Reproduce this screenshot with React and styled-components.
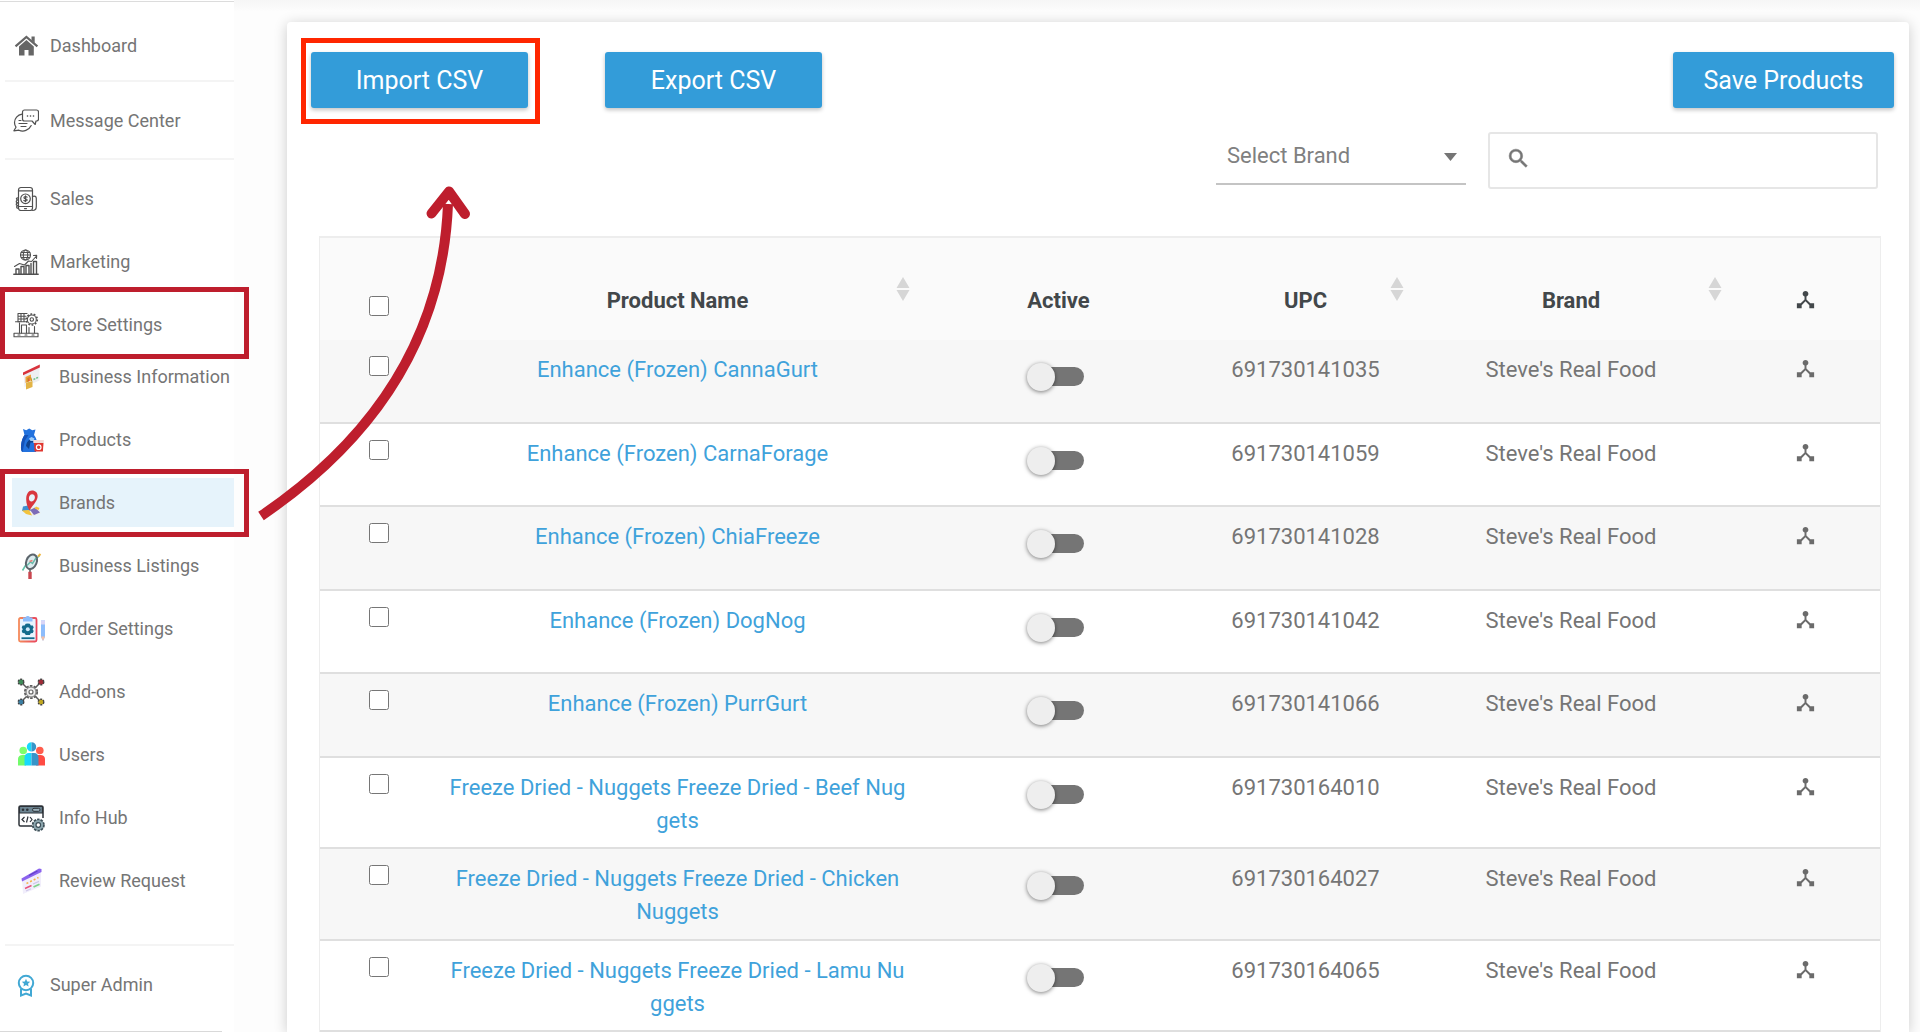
import React from "react";
import styled, { createGlobalStyle } from "styled-components";

const GlobalStyle = createGlobalStyle`
  *, *::before, *::after { box-sizing: border-box; }
  body { margin: 0; background: #fff; overflow-x: hidden; }
  body, button, input, select { font-family: Roboto, "Liberation Sans", sans-serif; }
`;

const crimson = "#be1e2d";

/* ---------- layout ---------- */

const Page = styled.div`
  position: relative;
  display: flex;
  align-items: stretch;
  min-height: 100vh;
`;

const Sidebar = styled.nav`
  flex: none;
  width: 234px;
  margin-top: 1px;
  border-top: 1px solid #dcdcdc;
  padding-top: 19px;
  display: flex;
  flex-direction: column;
`;

const Main = styled.main`
  flex: 1;
  min-width: 0;
  display: flex;
  padding: 22px 11px 0 53px;
  background: linear-gradient(#f6f6f6, #fdfdfd 12px);
`;

const Card = styled.section`
  flex: 1;
  min-width: 0;
  padding: 30px 0 0;
  background: #fff;
  border-radius: 4px 4px 0 0;
  box-shadow: 0 2px 14px rgba(0, 0, 0, 0.2);
`;

/* ---------- sidebar ---------- */

const Group = styled.ul`
  list-style: none;
  margin: ${(p) => (p.$nested ? "3px 0 0 12px" : "0 0 0 5px")};
  padding: 0;
  display: flex;
  flex-direction: column;
  gap: 14px;
`;

const Divider = styled.hr`
  width: 229px;
  height: 2px;
  margin: ${(p) => p.$before}px 0 14px 5px;
  border: 0;
  background: #f4f4f4;
`;

const EndLine = styled.hr`
  width: 222px;
  height: 1px;
  margin: 22px 0 0;
  border: 0;
  background: #d9d9d9;
`;

const Item = styled.li`
  position: relative;
`;

const NavLink = styled.a`
  display: flex;
  align-items: center;
  gap: ${(p) => (p.$nested ? 14 : 11)}px;
  height: 49px;
  padding-left: ${(p) => (p.$nested ? 5 : 8)}px;
  background: ${(p) => (p.$current ? "#e6f3fb" : "transparent")};
  color: #757575;
  font-size: 18px;
  line-height: 24px;
  text-decoration: none;
  white-space: nowrap;
  svg { flex: none; }
`;

const Callout = styled.span`
  position: absolute;
  top: ${(p) => p.$top}px;
  bottom: -10px;
  left: ${(p) => p.$left}px;
  right: -15px;
  border: 5px solid ${crimson};
  pointer-events: none;
`;

/* ---------- toolbar ---------- */

const Actions = styled.div`
  display: flex;
  align-items: center;
  gap: 77px;
  padding: 0 15px 0 24px;
`;

const Spacer = styled.span`
  flex: 1;
`;

const Highlight = styled.div`
  position: relative;
  display: flex;
  &::after {
    content: "";
    position: absolute;
    inset: -14px -12px -16px -10px;
    border: 5px solid #ff2600;
    pointer-events: none;
  }
`;

const ActionButton = styled.button`
  width: ${(p) => p.$width || 217}px;
  height: 56px;
  padding: 2px 0 0;
  border: 0;
  border-radius: 3px;
  background: #339cd9;
  box-shadow: 0 2px 4px rgba(0, 0, 0, 0.24);
  color: #fff;
  font-size: 25px;
  line-height: 32px;
  white-space: nowrap;
`;

const Filters = styled.div`
  display: flex;
  justify-content: flex-end;
  align-items: flex-start;
  gap: 22px;
  padding: 24px 31px 0;
`;

const BrandPicker = styled.label`
  position: relative;
  width: 250px;
  height: 53px;
  border-bottom: 2px solid #c4c4c4;
  svg {
    position: absolute;
    right: 9px;
    top: 21px;
    pointer-events: none;
  }
`;

const BrandSelect = styled.select`
  appearance: none;
  width: 100%;
  height: 46px;
  padding: 0 11px;
  border: 0;
  background: transparent;
  color: #808080;
  font-size: 22px;
  outline: 0;
`;

const SearchBox = styled.label`
  display: flex;
  align-items: center;
  gap: 12px;
  width: 390px;
  height: 57px;
  padding: 0 16px 4px;
  border: 2px solid #e6e6e6;
  border-radius: 3px;
`;

const SearchInput = styled.input`
  flex: 1;
  min-width: 0;
  height: 40px;
  border: 0;
  outline: 0;
  background: transparent;
  color: #555;
  font-size: 22px;
`;

/* ---------- table ---------- */

const TableWrap = styled.div`
  padding: 47px 28px 0 32px;
`;

const Table = styled.table`
  width: 100%;
  table-layout: fixed;
  border-collapse: separate;
  border-spacing: 0;
  border: solid #ededed;
  border-width: 2px 1px 0;
  color: #757575;
  font-size: 22px;
  line-height: 33px;
  text-align: center;
`;

const HeadCell = styled.th`
  position: relative;
  height: 102px;
  padding: 46px 0 0;
  vertical-align: top;
  background: #fafafa;
  color: #42474a;
  font-weight: 700;
`;

const Row = styled.tr`
  background: #fff;
  td { border-bottom: 2px solid #dfdfdf; padding: 13px 0 10px; vertical-align: top; }
  &:nth-child(odd) { background: #f7f7f7; }
  &:nth-child(odd) td { padding-bottom: 11px; }
`;

const NameCell = styled.td`
  && { padding-left: 10px; padding-right: 10px; }
  word-break: break-all;
`;

const ProductLink = styled.a`
  color: #3fa2db;
  text-decoration: none;
`;

const Tick = styled.input`
  display: block;
  width: 20px;
  height: 20px;
  margin: ${(p) => (p.$head ? 12 : 3)}px auto 0;
`;

const Switch = styled.input`
  appearance: none;
  position: relative;
  display: block;
  width: 51px;
  height: 19px;
  margin: 14px auto 25px;
  border-radius: 10px;
  background: #757575;
  &::before {
    content: "";
    position: absolute;
    left: -6px;
    top: -4px;
    width: 28px;
    height: 28px;
    border-radius: 50%;
    background: #eee;
    box-shadow: 0 1px 4px rgba(0, 0, 0, 0.5);
  }
`;

const SortButton = styled.button`
  position: absolute;
  top: 39px;
  right: 8px;
  display: flex;
  padding: 0;
  border: 0;
  background: none;
`;

const IconLine = styled.span`
  display: flex;
  justify-content: center;
  align-items: center;
  height: 31px;
`;

const ArrowOverlay = styled.svg`
  position: absolute;
  left: 250px;
  top: 180px;
  pointer-events: none;
`;

/* ---------- icons ---------- */

const Svg = ({ w = 26, h = 26, box = "0 0 26 26", children, ...rest }) => (
  <svg width={w} height={h} viewBox={box} fill="none" aria-hidden="true" {...rest}>
    {children}
  </svg>
);

const ink = { stroke: "#505050", strokeWidth: 1.2, strokeLinecap: "round", strokeLinejoin: "round" };

const HomeIcon = () => (
  <Svg>
    <path d="M6 13.5 13.4 7l7.4 6.500V22.500H15.500V17h-4v5.500H6z" fill="#666" />
    <path d="M2.500 13.300 13.400 4l11 9.300" stroke="#666" strokeWidth="2.200" />
    <path d="M18.500 3.500h3.200v6.500l-3.200-2.800z" fill="#666" />
  </Svg>
);

const MessageIcon = () => (
  <Svg>
    <g {...ink}>
      <path d="M11.500 2h12a2 2 0 0 1 2 2v7a2 2 0 0 1-2 2h-.5l-.8 3.500-3.200-3.500h-7.500a2 2 0 0 1-2-2V4a2 2 0 0 1 2-2z" />
      <path d="M9 6.200C4.500 7 1.500 10.500 1.500 14.500c0 1.800.6 3.400 1.500 4.700L.9 22.800l5-.6c4.500 2 10 .2 12.300-4.700" />
      <path d="M6 12.500h2M6 15.500h8M8 18.500h5" />
    </g>
    <g fill="#444">
      <circle cx="14.500" cy="8" r="0.800" />
      <circle cx="17.500" cy="8" r="0.800" />
      <circle cx="20.500" cy="8" r="0.800" />
    </g>
  </Svg>
);

const SalesIcon = () => (
  <Svg>
    <g {...ink}>
      <rect x="5.500" y="1.500" width="14" height="23" rx="2.500" />
      <path d="M5.500 4.800h14M5.500 20.500h14M11.500 22.600h2" />
      <circle cx="12.500" cy="12.800" r="4.800" />
      <path d="M14.100 11.200c-.6-.8-3.200-.8-3.200.5 0 1.500 3.300.8 3.300 2.300 0 1.300-2.700 1.300-3.400.4M12.500 9.800v6" strokeWidth="1.100" />
      <path d="M19.500 10.500c2.300-1 3.800 0 3.800 2v8c0 2.500-1 4-3.800 4M5.500 12c-2.800-.5-2.800 2 0 2-3 0-3 2.800 0 2.800-3 0-3 2.800 0 2.800-2.600 0-2.600 2.500 0 2.700" />
    </g>
  </Svg>
);

const MarketingIcon = () => (
  <Svg>
    <g {...ink} strokeWidth="1.100">
      <circle cx="12.500" cy="6" r="5" />
      <ellipse cx="12.500" cy="6" rx="2.200" ry="5" />
      <path d="M7.500 6h10M8.300 3.500h8.400M8.300 8.500h8.400" />
      <path d="M1.500 17.500l5-3 5 1.500 4-4 3 .5L23.500 7M20.500 6.500l3.200-.3-.2 3.200" />
      <path d="M.8 25.200h24.400M3 25v-5h3v5M8 25v-7.500h3V25M13 25v-8.500h3V25M18 25V14.500M20.500 25V12.500h3V25" strokeWidth="1.400" />
    </g>
  </Svg>
);

const StoreIcon = () => (
  <Svg>
    <g {...ink} strokeWidth="1.100">
      <path d="M5 1.500h9M5 1.500v8.200h7.500M5 4.200h8M5 7h7.500M8 1.500v8.200M11 1.500v8.200" />
      <path d="M2.500 9.700h4M6.500 11v10M8.500 21v-8h5v8M16 15.500V21M21.500 14.500V21" />
      <circle cx="18.800" cy="7.500" r="5.500" strokeWidth="1.600" strokeDasharray="1.800 1.600" strokeLinecap="butt" />
      <circle cx="18.800" cy="7.500" r="4.500" />
      <circle cx="18.800" cy="7.500" r="1.700" />
      <path d="M1 21.300h24v3.400H1zM5 23h2M12 23h2M19 23h2" />
    </g>
  </Svg>
);

const SubSvg = (props) => <Svg w={28} h={28} box="0 0 28 28" {...props} />;

const InfoIcon = () => (
  <SubSvg>
    <path d="M6.500 10 22.500 4v13.500L7.500 24z" fill="#eeeff2" />
    <path d="M6 9.500 22.800 1.500v3L6 12.200z" fill="#d8343d" />
    <path d="M8.500 14l5.500-2.500v6l-5.500 2.500z" fill="#f2a03a" />
    <path d="M10 15.500l2.500-1.200v3.700l-2.500 1z" fill="#e8542f" />
    <path d="M16.500 16.500l5.500-2.500" stroke="#6fc08b" strokeWidth="1.500" strokeDasharray="2 1" />
    <path d="M10.500 19v-2a2 2 0 0 1 4-.5v1.500" stroke="#c99a2d" strokeWidth="1.200" />
    <path d="M9 19.700l6.500-1.700v6L9 26.500z" fill="#e3b445" />
  </SubSvg>
);

const ProductsIcon = () => (
  <SubSvg>
    <path d="M6 3l3.200 1.200 3-1.700 3 1.700L18.500 3.500 17 9c2 2.500 3.500 6 3 11l-1 6H5.500C3 25.500 3.500 14 7.500 9z" fill="#2272de" />
    <path d="M7.500 9h4L8 14.500 5.500 26C3 25.500 3.500 14 7.500 9z" fill="#1552b8" />
    <path d="M9 20c.5-4 3-7 6-6.500l2 3h-3.500L12 23z" fill="#0f428f" />
    <path d="M12 12.500l2.500-1.500 3 1.500-1 2.500h-3z" fill="#9ccbf8" />
    <path d="M16.300 14h10.500v3H16.300z" fill="#f3dcd8" />
    <path d="M17 17h9.500l-.6 8.500h-8.300z" fill="#e0362f" />
    <circle cx="21.700" cy="21.200" r="2.300" stroke="#fff" strokeWidth="1.200" />
  </SubSvg>
);

const BrandsIcon = () => (
  <SubSvg>
    <path d="M6 18.500l5-2 11 3.500 1.500 4.500-7 2.500L5 22.500z" fill="#f0eee6" />
    <path d="M6 17.500l5-1 3 5-9 .5z" fill="#3f8fd0" />
    <path d="M5 21.500l7-.5 3 5.500-6-1.500z" fill="#f3c33c" />
    <path d="M13 21l5-2.500 5 5-6 2.500z" fill="#7c6cb8" />
    <path d="M19 17.500l3.500 1.500-1 2-4-1.500z" fill="#f3c33c" />
    <path fillRule="evenodd" d="M15 1.500c4 .1 6.200 2.800 5.500 7-.7 4-5 8-8 13C10.500 18 9 14 9.200 9.500 9.400 4.800 11.500 1.500 15 1.500zm.2 3.700c-2 0-3.400 2-3.300 4.300.1 2 1.300 3.200 2.800 3 2-.2 3.300-2.200 3.200-4.400-.1-1.800-1.200-2.900-2.700-2.900z" fill="#d9363e" />
  </SubSvg>
);

const ListingsIcon = () => (
  <SubSvg>
    <path d="M5.500 18.500l3-5M20 6l2.500-2.500" stroke="#62c3a9" strokeWidth="1.600" />
    <path d="M21 4.500l2.500-2.500" stroke="#eeb63f" strokeWidth="2" />
    <ellipse cx="14.500" cy="9.800" rx="5.200" ry="7.600" transform="rotate(22 14.500 9.800)" fill="#dcebee" stroke="#5c656c" strokeWidth="2" />
    <path d="M10 13.500l3.500-3.500 2 1.500 3.500-5.500" stroke="#66b8a8" strokeWidth="1.400" />
    <path d="M12.500 9.500l3-1" stroke="#e27d76" strokeWidth="1.400" />
    <path d="M13 17.500v3" stroke="#666" strokeWidth="1.600" />
    <path d="M13 19.800v7.200" stroke="#c9474f" strokeWidth="3.400" />
  </SubSvg>
);

const OrderIcon = () => (
  <SubSvg>
    <defs>
      <linearGradient id="clipboard-edge" x1="0" x2="1">
        <stop offset="0" stopColor="#f58a5a" />
        <stop offset="1" stopColor="#e9485c" />
      </linearGradient>
    </defs>
    <rect x="2" y="3" width="17.500" height="23.500" rx="1.500" fill="#e8f4ff" stroke="url(#clipboard-edge)" strokeWidth="1.800" />
    <path d="M6 2.500h2.500C9 .5 12.500.5 13 2.500H15.500V6.500H6z" fill="#8dbdfc" />
    <path d="M10.800 8.500l2 .2 1 1.700 2 .2.900 2-1.100 1.700 1.100 1.800-.9 2-2 .2-1 1.600-2.100.1-1.900-.1-1.200-1.700-2-.2-.9-2 1.100-1.700-1.100-1.700.9-2 2-.2 1.100-1.700z" fill="#136b8d" />
    <circle cx="10.800" cy="14.300" r="2" fill="#cbe7fa" />
    <path d="M4.500 23.200h13" stroke="#136b8d" strokeWidth="1.800" />
    <path d="M24 5.500h4V22L26 26l-2-4z" fill="#8dbdfc" />
    <path d="M24 5.500h4v4h-4z" fill="#d9d5f7" />
    <path d="M24 21.500h4L26 26z" fill="#f5bfa5" />
  </SubSvg>
);

const AddonsIcon = () => (
  <SubSvg>
    <path d="M4 4l20 20M24 4 4 24" stroke="#5a5a5a" strokeWidth="1.500" />
    <circle cx="14" cy="14" r="6.200" fill="#eee" stroke="#5f5f5f" strokeWidth="1.800" strokeDasharray="2.600 1.300" />
    <circle cx="14" cy="14" r="5" fill="#eee" stroke="#777" strokeWidth="1" />
    <circle cx="14" cy="14" r="2" fill="#fff" stroke="#666" strokeWidth="1.200" />
    <g stroke="#444" strokeWidth="1.400" strokeDasharray="2 1">
      <circle cx="4" cy="4" r="2.800" fill="#3e8b58" />
      <circle cx="24" cy="4" r="2.800" fill="#a02c38" />
      <circle cx="4" cy="24" r="2.800" fill="#3b7fa4" />
      <circle cx="24" cy="24" r="2.800" fill="#c2a820" />
    </g>
  </SubSvg>
);

const UsersIcon = () => (
  <SubSvg>
    <circle cx="6.200" cy="9.500" r="3.800" fill="#7dff6e" />
    <circle cx="22.800" cy="9.500" r="3.800" fill="#ff5d4d" />
    <path d="M1 24.500V18c0-2.500 2-4 4.500-4H9v10.500z" fill="#72fb6a" />
    <path d="M19 14h4.500c2.500 0 4.500 1.500 4.500 4v6.500h-9z" fill="#ff4b43" />
    <path d="M14.500 1.200a4.700 4.700 0 0 0 0 9.400zM14.500 12H12c-2.800 0-4.500 1.800-4.500 4.500v8h7z" fill="#17d8fb" />
    <path d="M14.500 1.200a4.700 4.700 0 0 1 0 9.400zM14.500 12H17c2.800 0 4.500 1.800 4.500 4.500v8h-7z" fill="#3795c9" />
  </SubSvg>
);

const HubIcon = () => (
  <SubSvg>
    <path d="M15 22H3.500A1.500 1.500 0 0 1 2 20.500V3.500A1.500 1.500 0 0 1 3.500 2h21A1.500 1.500 0 0 1 26 3.500V14" stroke="#2d3238" strokeWidth="1.500" />
    <path d="M2.500 2.500h23v6.500h-23z" fill="#6d8592" stroke="#2d3238" strokeWidth="1.200" />
    <circle cx="6" cy="5.800" r="1.300" fill="#2d3238" />
    <circle cx="10.300" cy="5.800" r="1.300" fill="#2d3238" />
    <rect x="15.500" y="4.300" width="7.500" height="3" rx="1.500" fill="#9bb1bb" stroke="#2d3238" />
    <path d="M7.500 13l-2.500 2.500L7.500 18M11 12.500l-1.500 6M13 13l2 2.500-2 2.500" stroke="#2d3238" strokeWidth="1.200" />
    <circle cx="21.300" cy="21" r="5.600" fill="#8ba5ad" stroke="#3d4f58" strokeWidth="1.800" strokeDasharray="2.500 1" />
    <circle cx="21.300" cy="21" r="4.500" fill="#8fa9b1" />
    <circle cx="21.300" cy="21" r="2.300" fill="#fff" stroke="#3d4f58" strokeWidth="1.200" />
  </SubSvg>
);

const ReviewIcon = () => (
  <SubSvg>
    <path d="M5 11.500 24 4v15.500L6 27z" fill="#f1eefb" />
    <path d="M4.500 11.500 22 1.500l2.500.5v3L5 14.500z" fill="#8b63ee" />
    <path d="M12 8.500 20.500 4" stroke="#6440c8" strokeWidth="1.200" />
    <path d="M9.500 16.500l12-6" stroke="#f6b44b" strokeWidth="1.600" strokeDasharray="2 2" />
    <path d="M8 21.500l6.500-3" stroke="#e7527e" strokeWidth="1.400" />
    <path d="M16.500 20l6-2.800" stroke="#7ed28b" strokeWidth="1.800" />
    <path d="M9 24l5-2.300M16 17l6-2.600" stroke="#cfc7ea" strokeWidth="1.200" />
  </SubSvg>
);

const AdminIcon = () => (
  <Svg>
    <circle cx="13" cy="11" r="7.200" stroke="#41a8d4" strokeWidth="2" />
    <path d="M13 6.700l1.200 2.700 3 .3-2.200 2 .6 2.900-2.600-1.500-2.600 1.500.6-2.900-2.200-2 3-.3z" fill="#41a8d4" />
    <path d="M8 17v6.500l5-2 5 2V17" stroke="#41a8d4" strokeWidth="2" />
  </Svg>
);

const HubNodeIcon = ({ color }) => (
  <Svg w={23} h={23} box="0 0 24 24">
    <path fill={color} d="M17 16l-4-4V8.820C14.160 8.400 15 7.300 15 6c0-1.660-1.340-3-3-3S9 4.340 9 6c0 1.300.84 2.400 2 2.820V12l-4 4H3v5h5v-3.050l4-4.200 4 4.200V21h5v-5h-4z" />
  </Svg>
);

const SortIcon = () => (
  <Svg w={14} h={24} box="0 0 14 24">
    <path d="M7 0l6.500 11h-13zM7 24l6.500-11h-13z" fill="#d6d6d6" />
  </Svg>
);

/* ---------- data ---------- */

const storeLinks = [
  { label: "Business Information", Icon: InfoIcon },
  { label: "Products", Icon: ProductsIcon },
  { label: "Brands", Icon: BrandsIcon, current: true },
  { label: "Business Listings", Icon: ListingsIcon },
  { label: "Order Settings", Icon: OrderIcon },
  { label: "Add-ons", Icon: AddonsIcon },
  { label: "Users", Icon: UsersIcon },
  { label: "Info Hub", Icon: HubIcon },
  { label: "Review Request", Icon: ReviewIcon },
];

const products = [
  ["Enhance (Frozen) CannaGurt", "691730141035"],
  ["Enhance (Frozen) CarnaForage", "691730141059"],
  ["Enhance (Frozen) ChiaFreeze", "691730141028"],
  ["Enhance (Frozen) DogNog", "691730141042"],
  ["Enhance (Frozen) PurrGurt", "691730141066"],
  ["Freeze Dried - Nuggets Freeze Dried - Beef Nuggets", "691730164010"],
  ["Freeze Dried - Nuggets Freeze Dried - Chicken Nuggets", "691730164027"],
  ["Freeze Dried - Nuggets Freeze Dried - Lamu Nuggets", "691730164065"],
];

const columnWidths = [117, 481, 281, 213, 318, 150];

/* ---------- parts ---------- */

function NavItem({ label, Icon, nested, current, children }) {
  return (
    <Item>
      <NavLink href="#" $nested={nested} $current={current} aria-current={current ? "page" : undefined}>
        <Icon />
        {label}
      </NavLink>
      {children}
    </Item>
  );
}

function ColumnTitle({ children, sortable }) {
  return (
    <HeadCell scope="col">
      {children}
      {sortable && (
        <SortButton type="button" aria-label={`Sort by ${children}`}>
          <SortIcon />
        </SortButton>
      )}
    </HeadCell>
  );
}

export default function App() {
  return (
    <>
      <GlobalStyle />
      <Page>
        <Sidebar>
          <Group>
            <NavItem label="Dashboard" Icon={HomeIcon} />
          </Group>
          <Divider $before={10} />
          <Group>
            <NavItem label="Message Center" Icon={MessageIcon} />
          </Group>
          <Divider $before={13} />
          <Group>
            <NavItem label="Sales" Icon={SalesIcon} />
            <NavItem label="Marketing" Icon={MarketingIcon} />
            <NavItem label="Store Settings" Icon={StoreIcon}>
              <Callout $top={-13} $left={-5} />
            </NavItem>
          </Group>
          <Group $nested>
            {storeLinks.map((link) => (
              <NavItem key={link.label} nested {...link}>
                {link.current && <Callout $top={-9} $left={-12} />}
              </NavItem>
            ))}
          </Group>
          <Divider $before={39} />
          <Group>
            <NavItem label="Super Admin" Icon={AdminIcon} />
          </Group>
          <EndLine />
        </Sidebar>

        <Main>
          <Card>
            <Actions>
              <Highlight>
                <ActionButton type="button">Import CSV</ActionButton>
              </Highlight>
              <ActionButton type="button">Export CSV</ActionButton>
              <Spacer />
              <ActionButton type="button" $width={221}>Save Products</ActionButton>
            </Actions>

            <Filters>
              <BrandPicker>
                <BrandSelect aria-label="Brand" defaultValue="">
                  <option value="">Select Brand</option>
                  <option>Steve's Real Food</option>
                </BrandSelect>
                <Svg w={13} h={8} box="0 0 13 8">
                  <path d="M0 0h13L6.500 8z" fill="#757575" />
                </Svg>
              </BrandPicker>
              <SearchBox>
                <Svg w={25} h={25} box="0 0 24 24">
                  <path
                    fill="#757575"
                    stroke="#757575"
                    strokeWidth="0.500"
                    d="M15.500 14h-.79l-.28-.27A6.471 6.471 0 0 0 16 9.500 6.500 6.500 0 1 0 9.500 16c1.610 0 3.090-.59 4.230-1.570l.27.28v.79l5 4.990L20.490 19l-4.990-5zm-6 0C7.010 14 5 11.990 5 9.500S7.010 5 9.500 5 14 7.010 14 9.500 11.990 14 9.500 14z"
                  />
                </Svg>
                <SearchInput type="search" aria-label="Search products" />
              </SearchBox>
            </Filters>

            <TableWrap>
              <Table>
                <colgroup>
                  {columnWidths.map((width, i) => (
                    <col key={i} width={width} />
                  ))}
                </colgroup>
                <thead>
                  <tr>
                    <HeadCell scope="col">
                      <Tick type="checkbox" $head aria-label="Select all products" />
                    </HeadCell>
                    <ColumnTitle sortable>Product Name</ColumnTitle>
                    <ColumnTitle>Active</ColumnTitle>
                    <ColumnTitle sortable>UPC</ColumnTitle>
                    <ColumnTitle sortable>Brand</ColumnTitle>
                    <HeadCell scope="col">
                      <IconLine>
                        <HubNodeIcon color="#42474a" />
                      </IconLine>
                    </HeadCell>
                  </tr>
                </thead>
                <tbody>
                  {products.map(([name, upc]) => (
                    <Row key={upc}>
                      <td>
                        <Tick type="checkbox" aria-label={`Select ${name}`} />
                      </td>
                      <NameCell>
                        <ProductLink href="#">{name}</ProductLink>
                      </NameCell>
                      <td>
                        <Switch type="checkbox" role="switch" aria-label={`${name} active`} />
                      </td>
                      <td>{upc}</td>
                      <td>Steve's Real Food</td>
                      <td>
                        <IconLine>
                          <HubNodeIcon color="#6b6b6b" />
                        </IconLine>
                      </td>
                    </Row>
                  ))}
                </tbody>
              </Table>
            </TableWrap>
          </Card>
        </Main>

        <ArrowOverlay width="230" height="350" viewBox="250 180 230 350" fill="none" aria-hidden="true">
          <path d="M448 204C443 330 382 434 261 516" stroke={crimson} strokeWidth="10" />
          <path d="M431.500 213.500 449 191.500l16 22.500" stroke={crimson} strokeWidth="10" strokeLinecap="round" strokeLinejoin="round" />
        </ArrowOverlay>
      </Page>
    </>
  );
}
